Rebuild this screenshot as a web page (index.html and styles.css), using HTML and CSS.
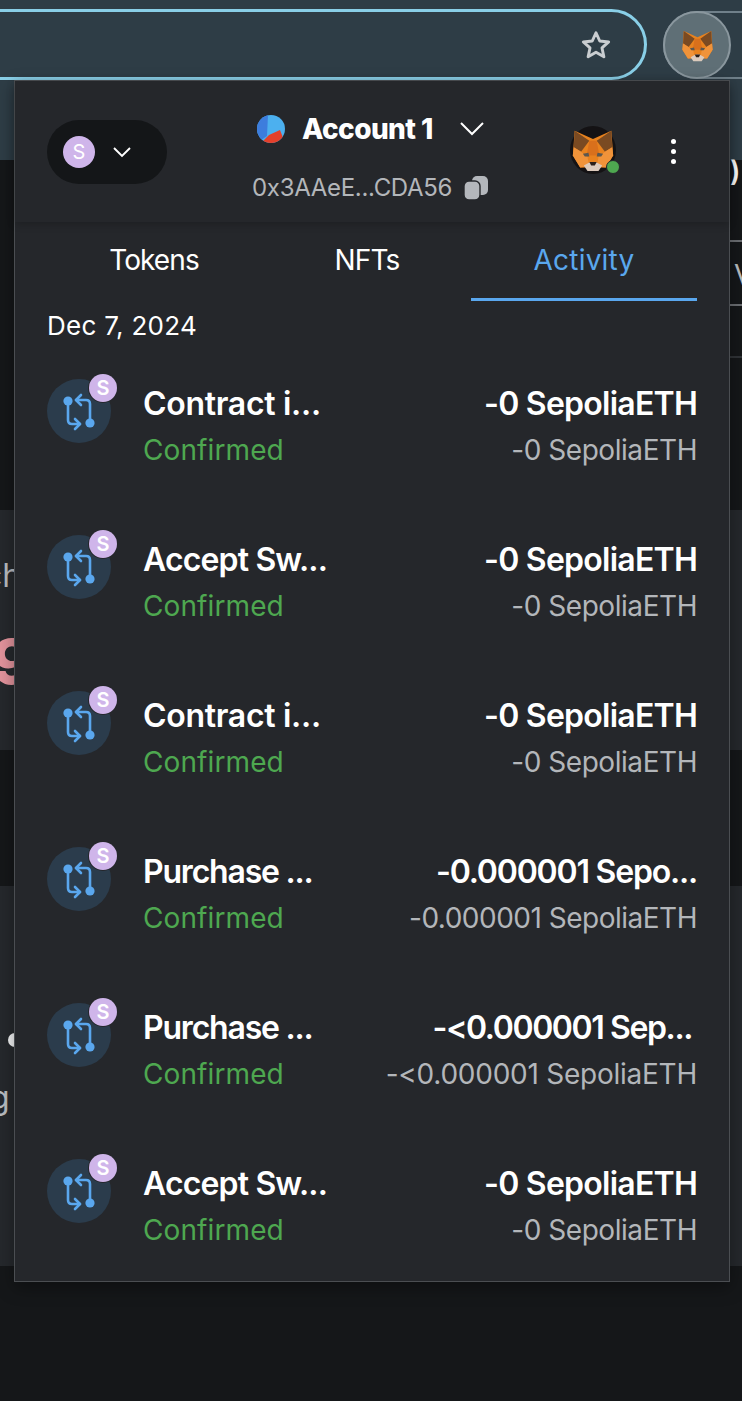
FILE: index.html
```html
<!DOCTYPE html>
<html lang="en">
<head>
<meta charset="utf-8">
<title>MetaMask activity</title>
<link rel="stylesheet" href="styles.css">
</head>
<body>
<svg class="defs" width="0" height="0" aria-hidden="true">
  <defs>
    <symbol id="fox" viewBox="0 0 48 48">
      <polygon points="4,3 24,12 44,3 46,30 38,43 10,43 2,30" fill="#e8821e"/>
      <polygon points="4,3 20,14 11,26 3,21" fill="#7a4a22"/>
      <polygon points="44,3 28,14 37,26 45,21" fill="#7a4a22"/>
      <polygon points="20,14 28,14 31,30 17,30" fill="#d9701c"/>
      <polygon points="3,21 11,26 18,32 20,42 10,43 2,30" fill="#f0933a"/>
      <polygon points="45,21 37,26 30,32 28,42 38,43 46,30" fill="#f0933a"/>
      <polygon points="13,28 19,27 20,31 15,31" fill="#5b5750"/>
      <polygon points="35,28 29,27 28,31 33,31" fill="#5b5750"/>
      <polygon points="14,41 21,37 27,37 34,41 30,47 18,47" fill="#dccabc"/>
      <polygon points="20,37 28,37 26,41 22,41" fill="#2a1f1a"/>
    </symbol>
    <symbol id="swap" viewBox="0 0 64 64">
      <g fill="none" stroke="#5aa7ee" stroke-width="2.6" stroke-linecap="round" stroke-linejoin="round">
        <path d="M21 26V41q0 4 4 4H33"/>
        <path d="M28 40l5 5-5 5"/>
        <path d="M43 40V25q0-4-4-4H29"/>
        <path d="M34 16l-5 5 5 5"/>
      </g>
      <circle cx="21" cy="22" r="4.6" fill="#5aa7ee"/>
      <circle cx="43" cy="44" r="4.6" fill="#5aa7ee"/>
    </symbol>
  </defs>
</svg>

<div class="backdrop">
  <header class="chrome">
    <div class="omnibox">
      <svg class="star" viewBox="0 0 24 24"><path d="M12 2.8l2.8 6.2 6.7.7-5 4.5 1.4 6.6L12 17.4l-5.9 3.4 1.4-6.6-5-4.5 6.7-.7z" fill="none" stroke="#c9cdd0" stroke-width="2.2" stroke-linejoin="round"/></svg>
    </div>
    <div class="ext-group">
      <div class="ext-btn"><svg class="ext-fox"><use href="#fox"/></svg></div>
    </div>
  </header>
  <main class="page">
    <div class="side-card first"><span class="frag-a">ch</span><span class="frag-b">9</span></div>
    <div class="side-card second"><span class="frag-c"></span><span class="frag-d">g</span></div>
  </main>
  <div class="right-strip">
    <span class="frag-e">)</span>
    <div class="frag-box"><span>V</span></div>
    <div class="frag-rule"></div>
  </div>
</div>

<section class="popup">
  <div class="popup-head">
    <button class="network">
      <span class="net-dot">S</span>
      <svg class="chev-sm" viewBox="0 0 20 12"><path d="M2 2l8 8 8-8" fill="none" stroke="#fff" stroke-width="1.9"/></svg>
    </button>
    <div class="account">
      <div class="account-name">
        <svg class="jazz" viewBox="0 0 28 28">
          <defs><clipPath id="jazz-clip"><circle cx="14" cy="14" r="14"/></clipPath></defs>
          <g clip-path="url(#jazz-clip)">
            <rect width="28" height="28" fill="#4cb0ef"/>
            <polygon points="0,0 11,0 10,21 0,28" fill="#3d7ddd"/>
            <polygon points="4,28 12,20 23,15 28,28" fill="#e5402b"/>
          </g>
        </svg>
        <span class="name">Account 1</span>
        <svg class="chev-lg" viewBox="0 0 26 16"><path d="M2 2l11 11L24 2" fill="none" stroke="#fff" stroke-width="2"/></svg>
      </div>
      <div class="account-addr">
        <span>0x3AAeE...CDA56</span>
        <svg class="copy" viewBox="0 0 26 26"><rect x="9" y="1" width="16" height="19" rx="5" fill="#b4b7bc"/><rect x="1" y="6" width="16" height="19" rx="5" fill="#b4b7bc" stroke="#25272b" stroke-width="1.4"/></svg>
      </div>
    </div>
    <div class="avatar">
      <svg class="avatar-fox"><use href="#fox"/></svg>
      <span class="online"></span>
    </div>
    <div class="kebab"><i></i><i></i><i></i></div>
  </div>

  <nav class="tabs">
    <div class="tab">Tokens</div>
    <div class="tab nfts">NFTs</div>
    <div class="tab active">Activity</div>
  </nav>

  <div class="date">Dec 7, 2024</div>

  <ul class="rows">
    <li class="row">
      <div class="tx-icon"><svg class="swap"><use href="#swap"/></svg><span class="badge">S</span></div>
      <div class="tx-left"><div class="tx-title">Contract i...</div><div class="tx-status">Confirmed</div></div>
      <div class="tx-right"><div class="tx-amount">-0 SepoliaETH</div><div class="tx-fiat">-0 SepoliaETH</div></div>
    </li>
    <li class="row">
      <div class="tx-icon"><svg class="swap"><use href="#swap"/></svg><span class="badge">S</span></div>
      <div class="tx-left"><div class="tx-title accept">Accept Sw...</div><div class="tx-status">Confirmed</div></div>
      <div class="tx-right"><div class="tx-amount">-0 SepoliaETH</div><div class="tx-fiat">-0 SepoliaETH</div></div>
    </li>
    <li class="row">
      <div class="tx-icon"><svg class="swap"><use href="#swap"/></svg><span class="badge">S</span></div>
      <div class="tx-left"><div class="tx-title">Contract i...</div><div class="tx-status">Confirmed</div></div>
      <div class="tx-right"><div class="tx-amount">-0 SepoliaETH</div><div class="tx-fiat">-0 SepoliaETH</div></div>
    </li>
    <li class="row">
      <div class="tx-icon"><svg class="swap"><use href="#swap"/></svg><span class="badge">S</span></div>
      <div class="tx-left"><div class="tx-title narrow">Purchase ...</div><div class="tx-status">Confirmed</div></div>
      <div class="tx-right"><div class="tx-amount long">-0.000001 Sepo...</div><div class="tx-fiat long">-0.000001 SepoliaETH</div></div>
    </li>
    <li class="row">
      <div class="tx-icon"><svg class="swap"><use href="#swap"/></svg><span class="badge">S</span></div>
      <div class="tx-left"><div class="tx-title narrow">Purchase ...</div><div class="tx-status">Confirmed</div></div>
      <div class="tx-right"><div class="tx-amount trunc">-&lt;0.000001 Sep...</div><div class="tx-fiat longer">-&lt;0.000001 SepoliaETH</div></div>
    </li>
    <li class="row">
      <div class="tx-icon"><svg class="swap"><use href="#swap"/></svg><span class="badge">S</span></div>
      <div class="tx-left"><div class="tx-title accept">Accept Sw...</div><div class="tx-status">Confirmed</div></div>
      <div class="tx-right"><div class="tx-amount">-0 SepoliaETH</div><div class="tx-fiat">-0 SepoliaETH</div></div>
    </li>
  </ul>
</section>
</body>
</html>
```
FILE: styles.css
```css
* { box-sizing: border-box; }
html, body { margin: 0; padding: 0; }
body {
  width: 742px;
  height: 1401px;
  position: relative;
  overflow: hidden;
  background: #151719;
  font-family: "Inter", "Noto Sans", sans-serif;
  color: #fff;
}
.defs { position: absolute; }
ul { list-style: none; margin: 0; padding: 0; }

.backdrop { width: 742px; height: 1401px; display: flex; flex-direction: column; position: relative; }
.chrome {
  height: 160px;
  flex: none;
  background: #2e3d46;
  display: flex;
  align-items: flex-start;
  padding-top: 9px;
}
.omnibox {
  width: 687px;
  height: 71px;
  margin-left: -40px;
  border: 3px solid #89cfe7;
  border-radius: 36px;
  display: flex;
  align-items: center;
  justify-content: flex-end;
  padding-right: 32px;
  flex: none;
}
.star { width: 32px; height: 32px; }
.ext-group {
  margin-left: 16px;
  flex: 1;
  height: 68px;
  margin-top: 2px;
  border: 2px solid #70808a;
  border-right: 0;
  border-radius: 34px 0 0 34px;
}
.ext-btn {
  width: 68px;
  height: 68px;
  margin: -2px 0 0 -2px;
  border-radius: 50%;
  background: #5f6f76;
  border: 2px solid #8a979e;
  display: flex;
  align-items: center;
  justify-content: center;
}
.ext-fox { width: 33px; height: 33px; }

.page { flex: 1; padding-top: 350px; display: flex; flex-direction: column; }
.side-card { background: #25282c; width: 100%; position: relative; overflow: hidden; color: #b9bcc0; }
.side-card.first { height: 240px; }
.side-card.second { height: 380px; margin-top: 136px; }
.frag-a { position: absolute; left: -16px; top: 46px; font-size: 32px; }
.frag-b { position: absolute; left: -8px; top: 114px; font-size: 62px; font-weight: 800; color: #e2939c; line-height: 76px; }
.frag-c { position: absolute; left: 8px; top: 147px; width: 14px; height: 14px; border-radius: 50%; background: #f2f3f4; }
.frag-d { position: absolute; left: -10px; top: 192px; font-size: 32px; }

.right-strip { position: absolute; left: 729px; top: 160px; width: 13px; height: 300px; }
.frag-e { position: absolute; left: 1px; top: -4px; font-size: 28px; font-weight: 600; color: #fff; line-height: 30px; }
.frag-box { position: absolute; left: 0; top: 80px; width: 13px; height: 66px; border-top: 2px solid #6b6e72; border-bottom: 2px solid #6b6e72; color: #b9bcc0; font-size: 28px; padding: 16px 0 0 5px; overflow: hidden; }
.frag-rule { position: absolute; left: 0; top: 196px; width: 13px; height: 2px; background: #303337; }

.popup {
  position: absolute;
  left: 14px;
  top: 80px;
  width: 716px;
  height: 1202px;
  background: #25272b;
  border: 1px solid #4b4e52;
  box-shadow: 0 6px 16px rgba(0,0,0,.35);
}
.popup-head {
  height: 141px;
  background: #25272b;
  box-shadow: 0 2px 8px rgba(0,0,0,.22);
  display: flex;
  align-items: center;
  position: relative;
  padding-left: 32px;
}
.network {
  width: 120px;
  height: 64px;
  border: 0;
  border-radius: 32px;
  background: #141618;
  display: flex;
  align-items: center;
  padding: 0 0 0 16px;
  gap: 17px;
  margin-top: 1px;
}
.net-dot {
  width: 32px;
  height: 32px;
  border-radius: 50%;
  background: #cfb5ea;
  color: #fff;
  font: 400 20px "Inter", sans-serif;
  display: flex;
  align-items: center;
  justify-content: center;
}
.chev-sm { width: 20px; height: 12px; }
.account { width: 290px; margin-left: 75px; display: flex; flex-direction: column; align-items: flex-start; }
.account-name { display: flex; align-items: center; margin-left: 15px; height: 32px; margin-top: 12px; }
.jazz { width: 28px; height: 28px; margin-right: 17px; }
.name { font-size: 28px; font-weight: 800; letter-spacing: -.6px; }
.chev-lg { width: 26px; height: 16px; margin-left: 26px; }
.account-addr { display: flex; align-items: center; margin-top: 28px; margin-left: 10px; font-size: 24px; color: #b3b6ba; letter-spacing: -.3px; }
.copy { width: 26px; height: 26px; margin-left: 11px; }
.avatar { width: 46px; height: 48px; margin-left: 38px; position: relative; border-radius: 50%; background: #141214; display: flex; align-items: center; justify-content: center; margin-top: -3px; }
.avatar-fox { width: 44px; height: 44px; }
.online { position: absolute; right: -4px; bottom: 0; width: 14px; height: 14px; border-radius: 50%; background: #4ea850; border: 1px solid #25272b; }
.kebab { display: flex; flex-direction: column; gap: 5px; margin-left: 55px; }
.kebab i { width: 5px; height: 5px; border-radius: 50%; background: #fff; display: block; }

.tabs { display: flex; height: 80px; padding-left: 32px; }
.tab { width: 214px; font-size: 28px; height: 79px; display: flex; align-items: center; justify-content: center; border-bottom: 3px solid transparent; letter-spacing: -.9px; }
.tab.nfts { width: 212px; }
.tab.active { width: 226px; color: #5aa7ee; border-bottom-color: #5aa7ee; margin-left: -2px; letter-spacing: .2px; }

.date { margin: 8px 0 0 32px; font-size: 26px; line-height: 32px; letter-spacing: .3px; }

.rows { margin-top: 12px; }
.row { height: 156px; display: flex; padding: 25px 32px 0; }
.tx-icon { width: 64px; height: 64px; border-radius: 50%; background: #2b3c4c; position: relative; flex: none; }
.swap { width: 64px; height: 64px; display: block; }
.badge {
  position: absolute;
  right: -6px;
  top: -5px;
  width: 28px;
  height: 28px;
  border-radius: 50%;
  background: #cfb5ea;
  box-shadow: 0 0 0 1px #25272b;
  font: 600 20px "Inter", sans-serif;
  display: flex;
  align-items: center;
  justify-content: center;
}
.tx-left { margin-left: 32px; margin-top: 1px; flex: none; }
.tx-title { font-size: 32px; font-weight: 600; line-height: 48px; white-space: nowrap; letter-spacing: -.3px; }
.tx-title.accept { letter-spacing: -.85px; }
.tx-title.narrow { letter-spacing: -1.2px; }
.tx-status { font-size: 28px; line-height: 44px; color: #4ea850; white-space: nowrap; letter-spacing: .1px; }
.tx-right { margin-left: auto; margin-top: 1px; text-align: right; }
.tx-amount { font-size: 32px; font-weight: 600; line-height: 48px; white-space: nowrap; letter-spacing: -.75px; }
.tx-amount.long { letter-spacing: -1.2px; }
.tx-amount.trunc { letter-spacing: -1.4px; padding-right: 5px; }
.tx-fiat { font-size: 28px; line-height: 44px; color: #b3b6ba; white-space: nowrap; letter-spacing: -.45px; }
.tx-fiat.long { letter-spacing: -.5px; }
.tx-fiat.longer { letter-spacing: -.25px; }
```
